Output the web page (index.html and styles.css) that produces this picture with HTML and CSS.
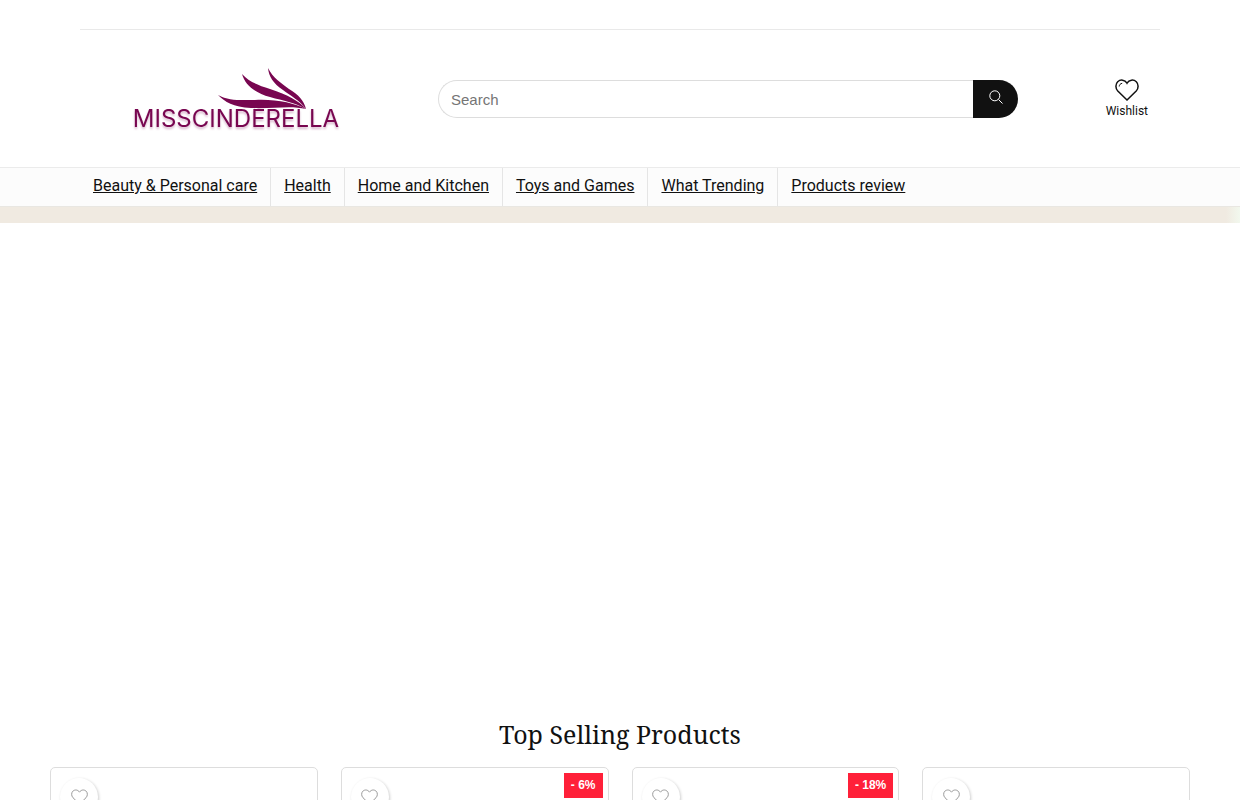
FILE: index.html
```html
<!DOCTYPE html>
<html lang="en">
<head>
<meta charset="utf-8">
<meta name="viewport" content="width=device-width, initial-scale=1">
<title>Misscinderella</title>
<link rel="stylesheet" href="styles.css">
</head>
<body>
<svg class="sprite" aria-hidden="true">
  <symbol id="heart" viewBox="0 0 24 22"><path d="M12 21 2.800 12C.3 9.300.3 5 2.700 2.700 5.500.2 9.800.6 12 4.200 14.200.6 18.500.2 21.300 2.700 23.700 5 23.700 9.300 21.200 12Z"/></symbol>
</svg>
<div class="container topbar"></div>
<header class="container header">
  <a class="logo" href="#" aria-label="Misscinderella">
    <svg viewBox="0 0 250 76" width="250" height="76">
      <g class="logo-wing">
        <path d="M106 34C117 40 127 39 143 39C164 38 182 42 194 48C178 44 161 48 139 47C121 46 113 41 106 34Z"/>
        <path d="M130 13C137 21 146 24 158 28C176 34 187 40 194 48C182 41 172 40 158 36C143 32 133 24 130 13Z"/>
        <path d="M156 7C161 17 169 22 177 28C187 34 192 40 194 48C187 39 179 35 171 29C161 22 157 16 156 7Z"/>
      </g>
      <text class="logo-text" x="124" y="66" text-anchor="middle">MISSCINDERELLA</text>
    </svg>
  </a>
  <form class="search" role="search">
    <input class="search-input" type="text" placeholder="Search" aria-label="Search">
    <button class="search-button" type="button" aria-label="Submit search">
      <svg viewBox="0 0 14 14" width="14" height="14"><circle cx="5.800" cy="5.800" r="5"/><path d="m9.500 9.500 4 4"/></svg>
    </button>
  </form>
  <a class="wishlist" href="#">
    <svg class="wishlist-icon" viewBox="0 0 24 22" width="24" height="24"><use href="#heart"/><path class="shine" d="M4.200 7.500C4.300 5.700 5.500 4.500 7.200 4.300"/></svg>
    <span>Wishlist</span>
  </a>
</header>
<nav class="nav">
  <ul class="container menu">
    <li><a href="#">Beauty &amp; Personal care</a></li>
    <li><a href="#">Health</a></li>
    <li><a href="#">Home and Kitchen</a></li>
    <li><a href="#">Toys and Games</a></li>
    <li><a href="#">What Trending</a></li>
    <li><a href="#">Products review</a></li>
  </ul>
</nav>
<div class="banner"></div>
<main class="products">
  <h2 class="title">Top Selling Products</h2>
  <div class="grid">
    <article class="card"><button class="fav" aria-label="Add to wishlist"><svg width="17" height="16"><use href="#heart"/></svg></button></article>
    <article class="card"><button class="fav" aria-label="Add to wishlist"><svg width="17" height="16"><use href="#heart"/></svg></button><span class="sale">- 6%</span></article>
    <article class="card"><button class="fav" aria-label="Add to wishlist"><svg width="17" height="16"><use href="#heart"/></svg></button><span class="sale">- 18%</span></article>
    <article class="card"><button class="fav" aria-label="Add to wishlist"><svg width="17" height="16"><use href="#heart"/></svg></button></article>
  </div>
</main>
</body>
</html>
```
FILE: styles.css
```css
* { box-sizing: border-box; }
body { margin: 0; background: #fff; color: #111; font-family: Roboto, sans-serif; }
a { color: #111; }
svg { display: block; fill: none; stroke: currentColor; }
.sprite { display: none; }
.container { max-width: 1080px; margin: 0 auto; }
.topbar { height: 30px; border-bottom: 1px solid #e9e9e9; }
.header { display: flex; align-items: center; padding: 31px 12px 30px 32px; }
.logo { flex: none; margin-right: 76px; }
.logo-wing { fill: #780650; stroke: none; }
.logo-text { fill: #780650; stroke: none; font: 24px Inter, sans-serif; filter: drop-shadow(0 2px 1px rgba(120, 6, 80, .3)); }
.search { display: flex; flex: 0 1 580px; height: 38px; }
.search-input { flex: 1; min-width: 0; padding: 0 12px; border: 1px solid #ddd; border-right: 0; border-radius: 19px 0 0 19px; background: #fff; font: 15px "Liberation Sans", Arial, sans-serif; }
.search-input::placeholder { color: #757575; }
.search-button { display: flex; justify-content: center; width: 45px; padding: 10px 0; border: 0; border-radius: 0 19px 19px 0; background: #111; color: #fff; }
.wishlist { display: flex; flex-direction: column; align-items: center; margin-left: auto; font-size: 12px; line-height: 18px; text-decoration: none; }
.wishlist-icon { stroke-width: 1.5; }
.shine { stroke-width: 1; }
.nav { border-top: 1px solid #ebebeb; background: #fcfcfc; }
.menu { display: flex; padding: 0; list-style: none; }
.menu li { border-right: 1px solid #e5e5e5; }
.menu li:last-child { border-right: 0; }
.menu a { display: block; padding: 8px 13px 10px; font-size: 16px; line-height: 20px; }
.banner { height: 17px; border-top: 1px solid #e9e7e2; background: linear-gradient(to right, #f0eae1 calc(100% - 14px), #f2f8ee); }
.products { max-width: 1140px; margin: 0 auto; padding-top: 495px; }
.title { margin: 0 0 16px; text-align: center; font: 400 25px/33px "Roboto Slab", "Noto Serif", "DejaVu Serif", serif; }
.grid { display: grid; grid-template-columns: repeat(4, 1fr); gap: 23px; }
.card { display: flex; justify-content: space-between; align-items: flex-start; min-height: 380px; padding: 5px 5px 5px 9px; border: 1px solid #ddd; border-radius: 5px; }
.fav { display: flex; justify-content: center; align-items: center; width: 38px; height: 38px; margin-top: 5px; padding: 0; border: 0; border-radius: 50%; background: #fff; color: #999; box-shadow: 1px 1px 3px rgba(0, 0, 0, .2); }
.fav svg { stroke-width: 1.4; }
.sale { padding: 0 7px; background: #ff2039; color: #fff; font: bold 12px/25px "Liberation Sans", Arial, sans-serif; }
```
